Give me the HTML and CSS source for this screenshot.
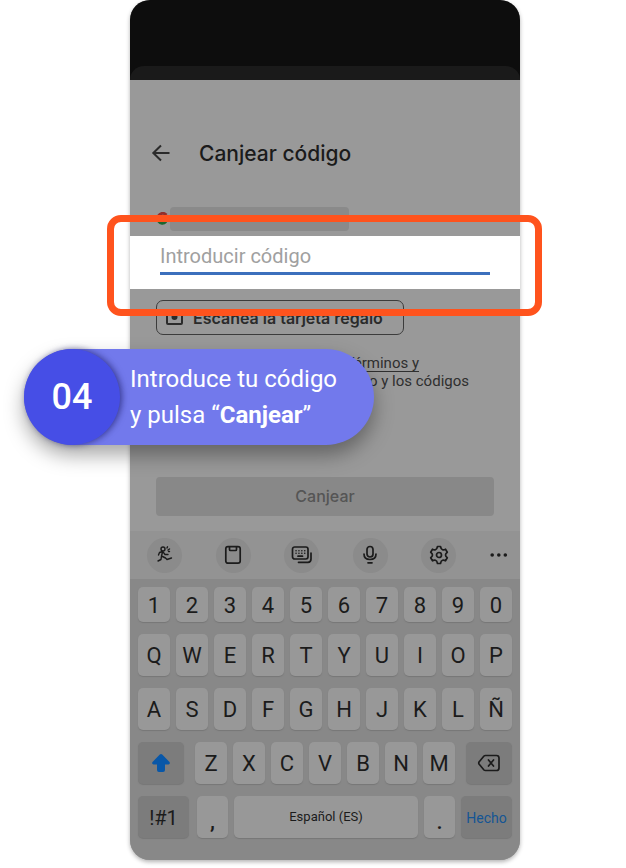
FILE: index.html
```
<!DOCTYPE html>
<html lang="es">
<head>
    <meta charset="UTF-8">
    <meta name="viewport" content="width=device-width, initial-scale=1.0">
    <title>Canjear código</title>
    <link rel="stylesheet" href="styles.css">
</head>
<body>
    <main class="stage">
      <section class="phone">
        <div class="backdrop"><div class="sheet-edge"></div></div>

        <header class="bar">
          <button class="back" type="button" aria-label="Atrás">
            <svg width="20" height="20" viewBox="0 0 20 20" fill="none" stroke="currentColor" stroke-width="2"><path d="M18.500 9H2M10 1.500L2.300 9L10 16.500"/></svg>
          </button>
          <h1>Canjear código</h1>
        </header>

        <form class="redeem">
          <div class="account">
            <svg width="12" height="14" viewBox="0 0 12 14" fill="none" stroke-width="3"><path d="M2 4.500Q6 -1 10.500 3" stroke="#922f2b"/><path d="M2 4.500Q1 6.500 2 8.500" stroke="#94741a"/><path d="M2 8.500Q6 13.500 10 9.500" stroke="#1d652f"/><path d="M6 6.500H10.500V9" stroke="#294e93" stroke-width="2"/></svg>
            <span class="account-name"></span>
          </div>
          <div class="field">
            <input class="code" type="text" placeholder="Introducir código" aria-label="Introducir código">
          </div>
          <button class="scan" type="button">
            <svg width="18" height="16" viewBox="0 0 18 16" fill="none" stroke="currentColor" stroke-width="2"><rect x="1" y="0" width="15" height="14" rx="1"/><circle cx="8.500" cy="7" r="3" fill="currentColor" stroke="none"/></svg>
            Escanea la tarjeta regalo
          </button>
          <p class="terms"><a href="#">Términos y</a><br>regalo y los códigos</p>
          <button class="submit" type="submit" disabled>Canjear</button>
        </form>

        <div class="tools">
          <button class="tool" type="button" aria-label="Stickers">
            <svg width="20" height="20" viewBox="0 0 20 20" fill="none" stroke="currentColor" stroke-width="1.400" stroke-linecap="round" stroke-linejoin="round"><circle cx="8" cy="4" r="2"/><path d="M7.500 6.500L4.500 7.500L3.500 10M8 6.800L10 9.500H13M7.500 7L6.500 11L10.500 13L12 14.500L16.500 13M6.500 11L6 14.500L3 16M12 3L12.500 1.800M13 5L14.500 4M13.500 6.500H14.500"/></svg>
          </button>
          <button class="tool" type="button" aria-label="Portapapeles">
            <svg width="20" height="20" viewBox="0 0 20 20" fill="none" stroke="currentColor" stroke-width="1.700"><rect x="2.800" y="1.600" width="14.400" height="16.600" rx="2.200"/><path d="M6.500 2V4.500Q6.500 5.500 7.500 5.500H12.500Q13.500 5.500 13.500 4.500V2"/></svg>
          </button>
          <button class="tool" type="button" aria-label="Teclados">
            <svg width="22" height="20" viewBox="0 0 22 20" fill="none" stroke="currentColor" stroke-width="1.700" stroke-linecap="round"><rect x="1.500" y="2" width="15.500" height="12" rx="2.200"/><path d="M20 8V14Q20 17.300 17 17.300H7.500M7 11.200H11.500"/><path d="M5 5.800H14M5 8.300H14" stroke-width="1.500" stroke-dasharray=".1 2.800"/></svg>
          </button>
          <button class="tool" type="button" aria-label="Dictado">
            <svg width="20" height="20" viewBox="0 0 20 20" fill="none" stroke="currentColor" stroke-width="1.700" stroke-linecap="round"><rect x="7" y="1.500" width="6" height="10.500" rx="3"/><path d="M4 9Q4 14.500 10 14.500T16 9M8 17.800H12"/></svg>
          </button>
          <button class="tool" type="button" aria-label="Ajustes">
            <svg width="20" height="20" viewBox="0 0 20 20" fill="none" stroke="currentColor" stroke-width="1.700" stroke-linejoin="round"><path d="M8.500 1.500H11.500Q12 4.200 13.500 4.700Q15 5.200 16.500 4.200L18.300 7.200Q16.500 8.500 16.500 10T18.300 12.800L16.500 15.800Q15 14.800 13.500 15.300Q12 15.800 11.500 18.500H8.500Q8 15.800 6.500 15.300Q5 14.800 3.500 15.800L1.700 12.800Q3.500 11.500 3.500 10T1.700 7.200L3.500 4.200Q5 5.200 6.500 4.700Q8 4.200 8.500 1.500Z"/><circle cx="10" cy="10" r="2.500"/></svg>
          </button>
          <button class="more" type="button" aria-label="Más">
            <svg width="18" height="4" viewBox="0 0 18 4" fill="currentColor"><circle cx="2.200" cy="2" r="1.800"/><circle cx="8.800" cy="2" r="1.800"/><circle cx="15.300" cy="2" r="1.800"/></svg>
          </button>
        </div>

        <div class="keyboard">
          <div class="row digits"><button>1</button><button>2</button><button>3</button><button>4</button><button>5</button><button>6</button><button>7</button><button>8</button><button>9</button><button>0</button></div>
          <div class="row"><button>Q</button><button>W</button><button>E</button><button>R</button><button>T</button><button>Y</button><button>U</button><button>I</button><button>O</button><button>P</button></div>
          <div class="row"><button>A</button><button>S</button><button>D</button><button>F</button><button>G</button><button>H</button><button>J</button><button>K</button><button>L</button><button>Ñ</button></div>
          <div class="row">
            <button class="dark shift" aria-label="Mayúsculas">
              <svg width="20" height="20" viewBox="0 0 20 20" fill="#0857a8"><path d="M8.800 1.500Q10 .5 11.200 1.500L18.500 9Q19.500 11 17.500 11.500H14V17Q14 19 12 19H8Q6 19 6 17V11.500H2.500Q.5 11 1.500 9Z"/></svg>
            </button>
            <button>Z</button><button>X</button><button>C</button><button>V</button><button>B</button><button>N</button><button>M</button>
            <button class="dark erase" aria-label="Borrar">
              <svg width="24" height="18" viewBox="0 0 24 18" fill="none" stroke="currentColor" stroke-width="1.700" stroke-linecap="round" stroke-linejoin="round"><path d="M8.500 1.500H19.500Q22 1.500 22 4V14Q22 16.500 19.500 16.500H8.500Q7.500 16.500 7 16L2 10Q1.500 9 2 8L7 2Q7.500 1.500 8.500 1.500ZM11.500 6L16.500 12M16.500 6L11.500 12"/></svg>
            </button>
          </div>
          <div class="row bottom">
            <button class="dark symbols">!#1</button>
            <button class="mark">,</button>
            <button class="space">Español (ES)</button>
            <button class="mark">.</button>
            <button class="dark done">Hecho</button>
          </div>
        </div>
      </section>

      <div class="highlight"></div>

      <aside class="step">
        <span class="step-number">04</span>
        <p>Introduce tu código<br>y pulsa “<b>Canjear</b>”</p>
      </aside>
    </main>
</body>
</html>
```
FILE: styles.css
```
* {
  box-sizing: border-box;
}
body {
  margin: 0;
  background: #fff;
  color: #1b1b1b;
  font-family: Roboto, sans-serif;
}
button {
  border: 0;
  padding: 0;
  background: none;
  color: inherit;
  font: inherit;
}
svg {
  display: block;
}

.stage {
  position: relative;
  padding: 0 106px 8px 130px;
}
.phone {
  overflow: hidden;
  border-radius: 20px;
  background: #999;
  box-shadow: 0 2px 4px rgba(0, 0, 0, 0.3);
}
.backdrop {
  padding-top: 66px;
  background: #0d0d0d;
}
.sheet-edge {
  height: 14px;
  border-radius: 14px 14px 0 0;
  background: #1a1a1a;
}

.bar {
  display: flex;
  align-items: center;
  gap: 28px;
  padding: 58px 21px 0;
}
.bar h1 {
  margin: 0;
  font: 500 21px/32px Inter, sans-serif;
}
.back {
  color: #2b2b2b;
}

.redeem {
  display: flex;
  flex-direction: column;
}
.account {
  display: flex;
  align-items: center;
  gap: 2px;
  padding: 37px 26px 5px;
}
.account-name {
  width: 179px;
  height: 24px;
  border-radius: 4px;
  background: #8a8a8a;
}
.field {
  padding: 4px 30px 14px;
  background: #fff;
}
.code {
  display: block;
  width: 100%;
  height: 35px;
  border: 0;
  border-bottom: 3px solid #3c70bd;
  padding: 0;
  font: 20px/32px Roboto, sans-serif;
  outline: 0;
}
.code::placeholder {
  color: #a0a0a0;
}
.scan {
  display: flex;
  align-items: center;
  align-self: flex-start;
  gap: 9px;
  height: 35px;
  margin: 11px 26px 0;
  border: 1px solid #3c3c3c;
  border-radius: 7px;
  padding: 0 20px 0 9px;
  color: #2b2b2b;
  font: 600 16px/32px Inter, sans-serif;
}
.terms {
  margin: 19px 51px 0;
  color: #2f2f2f;
  font-size: 15px;
  line-height: 18px;
  text-align: right;
}
.terms a {
  margin-right: 50px;
  color: inherit;
  text-underline-offset: 3px;
}
.submit {
  height: 39px;
  margin: 87px 26px 15px;
  border-radius: 4px;
  background: #888;
  color: #555;
  font: 500 16px/39px Inter, sans-serif;
}

.tools {
  display: flex;
  align-items: center;
  justify-content: space-between;
  height: 48px;
  padding: 0 14px 0 17px;
  background: #939393;
}
.tool {
  display: grid;
  place-items: center;
  width: 35px;
  height: 35px;
  border-radius: 50%;
  background: #8b8b8b;
}
.more {
  width: 16px;
}

.keyboard {
  display: flex;
  flex-direction: column;
  gap: 12px;
  padding: 8px 8px 22px;
  background: #888;
}
.row {
  display: flex;
  gap: 6px;
}
.row button {
  flex: 1;
  height: 42px;
  border-radius: 5px;
  background: #989898;
  box-shadow: 0 1px 1px #777;
  font-size: 22px;
  line-height: 44px;
}
.digits button {
  height: 35px;
  line-height: 37px;
}
.row .dark {
  display: grid;
  place-items: center;
  background: #7c7c7c;
}
.row .shift {
  flex: 0 0 46px;
  margin-right: 5px;
}
.row .erase {
  flex: 0 0 46px;
  margin-left: 5px;
}
.bottom .dark {
  flex: 0 0 51px;
  font-size: 20px;
}
.bottom .symbols {
  margin-right: 2px;
}
.bottom .mark {
  flex: 0 0 31px;
  padding-top: 4px;
  font-weight: 500;
}
.bottom .space {
  font-size: 13px;
  line-height: 42px;
}
.bottom .done {
  color: #145594;
  font-size: 14px;
}

.highlight {
  position: absolute;
  top: 215px;
  right: 84px;
  left: 107px;
  height: 101px;
  border: 7px solid #ff531d;
  border-radius: 14px;
}

.step {
  position: absolute;
  top: 349px;
  left: 24px;
  display: flex;
  align-items: center;
  gap: 10px;
  padding-right: 37px;
  border-radius: 48px;
  background: #7279ec;
  box-shadow: 0 10px 20px rgba(0, 0, 0, 0.35);
  color: #fff;
}
.step-number {
  display: grid;
  place-items: center;
  width: 96px;
  height: 96px;
  border-radius: 50%;
  background: #464ee6;
  box-shadow: 2px 0 6px rgba(20, 20, 90, 0.6);
  font-size: 36px;
  font-weight: 500;
}
.step p {
  margin: 0;
  font-size: 24px;
  line-height: 36px;
}
.step b {
  font-weight: 700;
}
```
